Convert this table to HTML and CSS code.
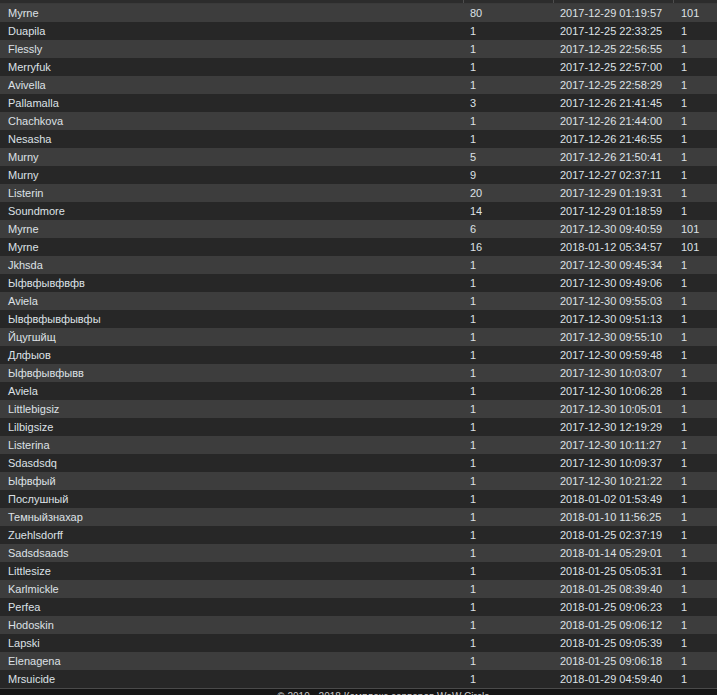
FILE: index.html
```html
<!DOCTYPE html>
<html>
<head>
<meta charset="utf-8">
<link rel="stylesheet" href="styles.css">
</head>
<body>
<div class="wrap">
<table class="stats">
<colgroup><col class="c1"><col class="c2"><col class="c3"><col class="c4"></colgroup>
<thead><tr class="head"><th></th><th></th><th></th><th></th></tr></thead>
<tbody>
<tr><td>Myrne</td><td>80</td><td>2017-12-29 01:19:57</td><td>101</td></tr>
<tr><td>Duapila</td><td>1</td><td>2017-12-25 22:33:25</td><td>1</td></tr>
<tr><td>Flessly</td><td>1</td><td>2017-12-25 22:56:55</td><td>1</td></tr>
<tr><td>Merryfuk</td><td>1</td><td>2017-12-25 22:57:00</td><td>1</td></tr>
<tr><td>Avivella</td><td>1</td><td>2017-12-25 22:58:29</td><td>1</td></tr>
<tr><td>Pallamalla</td><td>3</td><td>2017-12-26 21:41:45</td><td>1</td></tr>
<tr><td>Chachkova</td><td>1</td><td>2017-12-26 21:44:00</td><td>1</td></tr>
<tr><td>Nesasha</td><td>1</td><td>2017-12-26 21:46:55</td><td>1</td></tr>
<tr><td>Murny</td><td>5</td><td>2017-12-26 21:50:41</td><td>1</td></tr>
<tr><td>Murny</td><td>9</td><td>2017-12-27 02:37:11</td><td>1</td></tr>
<tr><td>Listerin</td><td>20</td><td>2017-12-29 01:19:31</td><td>1</td></tr>
<tr><td>Soundmore</td><td>14</td><td>2017-12-29 01:18:59</td><td>1</td></tr>
<tr><td>Myrne</td><td>6</td><td>2017-12-30 09:40:59</td><td>101</td></tr>
<tr><td>Myrne</td><td>16</td><td>2018-01-12 05:34:57</td><td>101</td></tr>
<tr><td>Jkhsda</td><td>1</td><td>2017-12-30 09:45:34</td><td>1</td></tr>
<tr><td>Ыфвфывфвфв</td><td>1</td><td>2017-12-30 09:49:06</td><td>1</td></tr>
<tr><td>Aviela</td><td>1</td><td>2017-12-30 09:55:03</td><td>1</td></tr>
<tr><td>Ывфвфывфывфы</td><td>1</td><td>2017-12-30 09:51:13</td><td>1</td></tr>
<tr><td>Йцугшйщ</td><td>1</td><td>2017-12-30 09:55:10</td><td>1</td></tr>
<tr><td>Длфыов</td><td>1</td><td>2017-12-30 09:59:48</td><td>1</td></tr>
<tr><td>Ыфвфывфывв</td><td>1</td><td>2017-12-30 10:03:07</td><td>1</td></tr>
<tr><td>Aviela</td><td>1</td><td>2017-12-30 10:06:28</td><td>1</td></tr>
<tr><td>Littlebigsiz</td><td>1</td><td>2017-12-30 10:05:01</td><td>1</td></tr>
<tr><td>Lilbigsize</td><td>1</td><td>2017-12-30 12:19:29</td><td>1</td></tr>
<tr><td>Listerina</td><td>1</td><td>2017-12-30 10:11:27</td><td>1</td></tr>
<tr><td>Sdasdsdq</td><td>1</td><td>2017-12-30 10:09:37</td><td>1</td></tr>
<tr><td>Ыфвфый</td><td>1</td><td>2017-12-30 10:21:22</td><td>1</td></tr>
<tr><td>Послушный</td><td>1</td><td>2018-01-02 01:53:49</td><td>1</td></tr>
<tr><td>Темныйзнахар</td><td>1</td><td>2018-01-10 11:56:25</td><td>1</td></tr>
<tr><td>Zuehlsdorff</td><td>1</td><td>2018-01-25 02:37:19</td><td>1</td></tr>
<tr><td>Sadsdsaads</td><td>1</td><td>2018-01-14 05:29:01</td><td>1</td></tr>
<tr><td>Littlesize</td><td>1</td><td>2018-01-25 05:05:31</td><td>1</td></tr>
<tr><td>Karlmickle</td><td>1</td><td>2018-01-25 08:39:40</td><td>1</td></tr>
<tr><td>Perfea</td><td>1</td><td>2018-01-25 09:06:23</td><td>1</td></tr>
<tr><td>Hodoskin</td><td>1</td><td>2018-01-25 09:06:12</td><td>1</td></tr>
<tr><td>Lapski</td><td>1</td><td>2018-01-25 09:05:39</td><td>1</td></tr>
<tr><td>Elenagena</td><td>1</td><td>2018-01-25 09:06:18</td><td>1</td></tr>
<tr><td>Mrsuicide</td><td>1</td><td>2018-01-29 04:59:40</td><td>1</td></tr>
</tbody>
</table>
<div class="footer">© 2010 - 2018 Комплекс серверов WoW Circle</div>
</div>
</body>
</html>
```
FILE: styles.css
```css
html, body {
  margin: 0;
  padding: 0;
  background: #151515;
}
body {
  font-family: "Liberation Sans", Arial, sans-serif;
  font-size: 11px;
  color: #dde1e6;
  overflow: hidden;
}
.wrap {
  width: 717px;
}
.stats {
  width: 717px;
  border-collapse: collapse;
  table-layout: fixed;
  border-bottom: 1px solid #4a4a4a;
}
.c1 { width: 463px; }
.c2 { width: 90px; }
.c3 { width: 120px; }
.c4 { width: 44px; }
.head th {
  height: 3px;
  padding: 0;
  background: #2c2c2c;
  border-right: 1px solid #4e4e4e;
  border-bottom: 1px solid #3a3a3a;
}
.head th:last-child {
  border-right: none;
}
.stats td {
  height: 18px;
  padding: 0 0 0 7px;
  line-height: 18px;
  white-space: nowrap;
  overflow: hidden;
}
.stats td:first-child {
  padding-left: 8px;
}
.stats td:last-child {
  padding-left: 8px;
}
.stats tbody tr:nth-child(odd) {
  background: #3d3d3d;
}
.stats tbody tr:nth-child(even) {
  background: #272727;
}
.footer {
  text-align: center;
  font-size: 10px;
  color: #c8c8c8;
  padding: 1px 0 0 50px;
  line-height: 13px;
  white-space: nowrap;
}
```
